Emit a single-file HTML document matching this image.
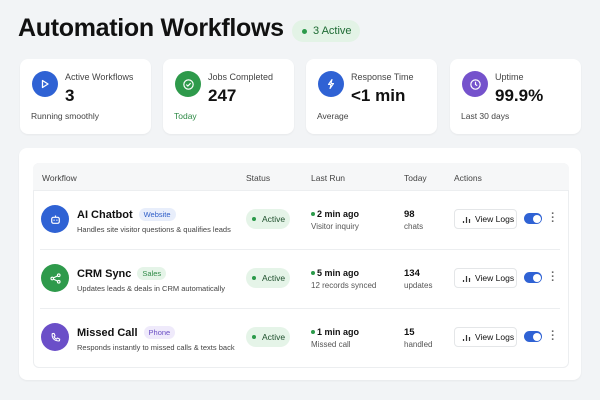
<!DOCTYPE html><html><head><style>
*{margin:0;padding:0;box-sizing:border-box}
body{width:600px;height:400px;background:#f2f4f6;font-family:"Liberation Sans",sans-serif;color:#111;position:relative;overflow:hidden}
.a{position:absolute}
h1{position:absolute;left:18px;top:14px;font-size:25px;font-weight:700;letter-spacing:-0.3px}
.badge{left:292px;top:20px;width:68px;height:22px;border-radius:11px;background:#e3f3e6;color:#1e6b34;font-size:11px;line-height:22px;padding-left:21px}
.badge:before{content:"";position:absolute;left:10px;top:9px;width:5px;height:5px;border-radius:50%;background:#2b9a4a}
.card{top:59px;width:131px;height:75px;background:#fff;border-radius:8px;box-shadow:0 1px 2px rgba(0,0,0,.05)}
.ic{width:26px;height:26px;border-radius:50%;display:flex;align-items:center;justify-content:center}
.card .ic{position:absolute;left:12px;top:12px}
.lab{position:absolute;left:45px;top:13px;font-size:9px;color:#444}
.val{position:absolute;left:45px;top:27px;font-size:17px;font-weight:700}
.ft{position:absolute;left:11px;top:52px;font-size:8.5px;color:#444}
.panel{left:19px;top:148px;width:562px;height:232px;background:#fff;border-radius:8px;box-shadow:0 1px 2px rgba(0,0,0,.05)}
.tbl{left:33px;top:163px;width:536px;height:205px;border:1px solid #eceef0;border-radius:6px;background:#fff}
.hd{left:33px;top:163px;width:536px;height:28px;background:#f6f7f8;border-radius:6px 6px 0 0;border-bottom:1px solid #eceef0}
.th{top:173px;font-size:8.5px;color:#444}
.sep{left:60px;width:508px;height:1px;background:#eceef0}
.nm{font-size:11px;font-weight:700}
.tag{display:inline-block;font-size:7.5px;font-weight:400;padding:2px 5px;border-radius:7px;margin-left:6px;vertical-align:1px}
.ds{font-size:7.5px;color:#444;margin-top:4px}
.st{width:44px;height:20px;border-radius:10px;background:#e5f4e8;font-size:8.5px;color:#1e4f2c;line-height:20px;padding-left:16px}
.st:before{content:"";position:absolute;left:6px;top:8px;width:4px;height:4px;border-radius:50%;background:#2b9a4a}
.lr{font-size:9px;font-weight:700;padding-left:6px;position:absolute}
.lr:before{content:"";position:absolute;left:0;top:3px;width:4px;height:4px;border-radius:50%;background:#2b9a4a}
.sm{font-size:8px;color:#555}
.btn{width:63px;height:20px;border:1px solid #e4e6e8;border-radius:4px;background:#fff;font-size:8.5px;line-height:18px;padding-left:20px}
.tg{width:18px;height:11px;border-radius:6px;background:#2f62d4}
.tg:after{content:"";position:absolute;right:1.5px;top:1.5px;width:8px;height:8px;border-radius:50%;background:#fff}
.dots{font-size:11px;color:#666;font-weight:700;line-height:4px;width:4px;text-align:center}
</style></head><body>
<h1>Automation Workflows</h1>
<div class="a badge">3 Active</div>

<div class="a card" style="left:20px"><div class="ic" style="background:#2f62d4"><svg width="12" height="12" viewBox="0 0 12 12"><path d="M3.5 2.5L9 6 3.5 9.5z" fill="none" stroke="#fff" stroke-width="1.3" stroke-linejoin="round"/></svg></div><div class="lab">Active Workflows</div><div class="val">3</div><div class="ft">Running smoothly</div></div>
<div class="a card" style="left:163px"><div class="ic" style="background:#2e9a4b"><svg width="13" height="13" viewBox="0 0 12 12"><circle cx="6" cy="6" r="4.3" fill="none" stroke="#fff" stroke-width="1.1"/><path d="M4 6.1l1.4 1.3L8 4.8" fill="none" stroke="#fff" stroke-width="1.1"/></svg></div><div class="lab">Jobs Completed</div><div class="val">247</div><div class="ft" style="color:#2e8a46">Today</div></div>
<div class="a card" style="left:306px"><div class="ic" style="background:#2f62d4"><svg width="12" height="12" viewBox="0 0 12 12"><path d="M7 1.5L3.5 6.5H6L5 10.5 8.5 5.5H6z" fill="none" stroke="#fff" stroke-width="1.1" stroke-linejoin="round"/></svg></div><div class="lab">Response Time</div><div class="val">&lt;1 min</div><div class="ft">Average</div></div>
<div class="a card" style="left:450px"><div class="ic" style="background:#7552cc"><svg width="13" height="13" viewBox="0 0 12 12"><circle cx="6" cy="6" r="4.3" fill="none" stroke="#fff" stroke-width="1.1"/><path d="M6 3.5V6l1.6 1" fill="none" stroke="#fff" stroke-width="1.1"/></svg></div><div class="lab">Uptime</div><div class="val">99.9%</div><div class="ft">Last 30 days</div></div>

<div class="a panel"></div>
<div class="a tbl"></div>
<div class="a hd"></div>
<div class="a th" style="left:42px">Workflow</div>
<div class="a th" style="left:246px">Status</div>
<div class="a th" style="left:311px">Last Run</div>
<div class="a th" style="left:404px">Today</div>
<div class="a th" style="left:454px">Actions</div>
<div class="a sep" style="top:249px;left:40px;width:520px"></div>
<div class="a sep" style="top:308px;left:40px;width:520px"></div>

<!-- row 1 -->
<div class="a ic" style="left:41px;top:205px;width:28px;height:28px;background:#2f62d4"><svg width="13" height="13" viewBox="0 0 12 12"><rect x="2.5" y="4" width="7" height="5.5" rx="1.5" fill="none" stroke="#fff" stroke-width="1.1"/><path d="M6 4V2.3" stroke="#fff" stroke-width="1.1"/><circle cx="4.7" cy="6.6" r=".6" fill="#fff"/><circle cx="7.3" cy="6.6" r=".6" fill="#fff"/></svg></div>
<div class="a" style="left:77px;top:208px"><div class="nm">AI Chatbot<span class="tag" style="background:#e8eefb;color:#2f5ec7">Website</span></div><div class="ds">Handles site visitor questions &amp; qualifies leads</div></div>
<div class="a st" style="left:246px;top:209px">Active</div>
<div class="a lr" style="left:311px;top:209px">2 min ago</div><div class="a sm" style="left:311px;top:222px">Visitor inquiry</div>
<div class="a" style="left:404px;top:209px;font-size:9.5px;font-weight:700">98</div><div class="a sm" style="left:404px;top:222px">chats</div>
<div class="a btn" style="left:454px;top:209px">View Logs</div>
<div class="a tg" style="left:524px;top:213px"></div>
<div class="a dots" style="left:551px;top:212px">·<br>·<br>·</div>

<!-- row 2 -->
<div class="a ic" style="left:41px;top:264px;width:28px;height:28px;background:#2e9a4b"><svg width="13" height="13" viewBox="0 0 12 12"><circle cx="3" cy="6" r="1.2" fill="none" stroke="#fff" stroke-width="1"/><circle cx="9" cy="3" r="1.2" fill="none" stroke="#fff" stroke-width="1"/><circle cx="9" cy="9" r="1.2" fill="none" stroke="#fff" stroke-width="1"/><path d="M4.1 5.4L7.9 3.6M4.1 6.6l3.8 1.8" stroke="#fff" stroke-width="1"/></svg></div>
<div class="a" style="left:77px;top:267px"><div class="nm">CRM Sync<span class="tag" style="background:#e5f4e8;color:#2e8a46">Sales</span></div><div class="ds">Updates leads &amp; deals in CRM automatically</div></div>
<div class="a st" style="left:246px;top:268px">Active</div>
<div class="a lr" style="left:311px;top:268px">5 min ago</div><div class="a sm" style="left:311px;top:281px">12 records synced</div>
<div class="a" style="left:404px;top:268px;font-size:9.5px;font-weight:700">134</div><div class="a sm" style="left:404px;top:281px">updates</div>
<div class="a btn" style="left:454px;top:268px">View Logs</div>
<div class="a tg" style="left:524px;top:272px"></div>
<div class="a dots" style="left:551px;top:271px">·<br>·<br>·</div>

<!-- row 3 -->
<div class="a ic" style="left:41px;top:323px;width:28px;height:28px;background:#6b4fc8"><svg width="13" height="13" viewBox="0 0 12 12"><path d="M3 2.5l1.6-.3 1 2.2-1 .8q.8 1.7 2.3 2.3l.8-1 2.2 1-.3 1.6Q6.5 9.5 4.2 7.3 2.5 5 3 2.5z" fill="none" stroke="#fff" stroke-width="1" stroke-linejoin="round"/></svg></div>
<div class="a" style="left:77px;top:326px"><div class="nm">Missed Call<span class="tag" style="background:#efeafb;color:#6a4fc4">Phone</span></div><div class="ds">Responds instantly to missed calls &amp; texts back</div></div>
<div class="a st" style="left:246px;top:327px">Active</div>
<div class="a lr" style="left:311px;top:327px">1 min ago</div><div class="a sm" style="left:311px;top:340px">Missed call</div>
<div class="a" style="left:404px;top:327px;font-size:9.5px;font-weight:700">15</div><div class="a sm" style="left:404px;top:340px">handled</div>
<div class="a btn" style="left:454px;top:327px">View Logs</div>
<div class="a tg" style="left:524px;top:331px"></div>
<div class="a dots" style="left:551px;top:330px">·<br>·<br>·</div>

<svg class="a" style="left:462px;top:215px" width="9" height="9" viewBox="0 0 9 9"><path d="M1.5 8V6M4.5 8V2M7.5 8V4" stroke="#333" stroke-width="1.2"/></svg>
<svg class="a" style="left:462px;top:274px" width="9" height="9" viewBox="0 0 9 9"><path d="M1.5 8V6M4.5 8V2M7.5 8V4" stroke="#333" stroke-width="1.2"/></svg>
<svg class="a" style="left:462px;top:333px" width="9" height="9" viewBox="0 0 9 9"><path d="M1.5 8V6M4.5 8V2M7.5 8V4" stroke="#333" stroke-width="1.2"/></svg>
</body></html>
